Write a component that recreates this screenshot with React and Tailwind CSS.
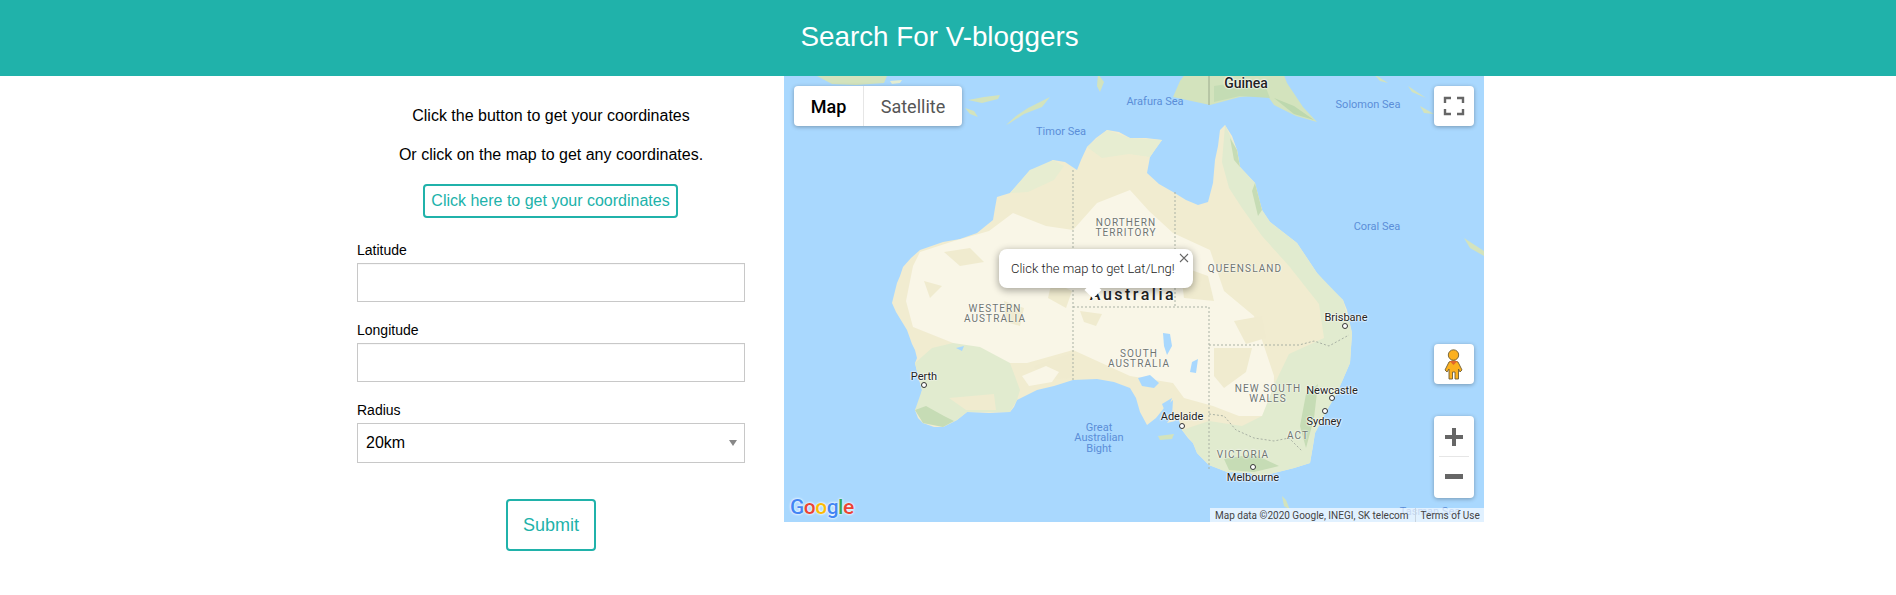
import React from "react";

const regions = [
  { t: "NORTHERN", x: 342, y: 147 },
  { t: "TERRITORY", x: 342, y: 157 },
  { t: "QUEENSLAND", x: 461, y: 193 },
  { t: "WESTERN", x: 211, y: 233 },
  { t: "AUSTRALIA", x: 211, y: 243 },
  { t: "SOUTH", x: 355, y: 278 },
  { t: "AUSTRALIA", x: 355, y: 288 },
  { t: "NEW SOUTH", x: 484, y: 313 },
  { t: "WALES", x: 484, y: 323 },
  { t: "VICTORIA", x: 459, y: 379 },
  { t: "ACT", x: 514, y: 360 },
];

const seas = [
  { t: "Timor Sea", x: 277, y: 55 },
  { t: "Arafura Sea", x: 371, y: 25 },
  { t: "Solomon Sea", x: 584, y: 28 },
  { t: "Coral Sea", x: 593, y: 150 },
  { t: "Great", x: 315, y: 351 },
  { t: "Australian", x: 315, y: 361 },
  { t: "Bight", x: 315, y: 372 },
  { t: "Tasman Sea", x: 646, y: 435 },
];

const cities = [
  { t: "Perth", x: 140, y: 300, dx: 140, dy: 309 },
  { t: "Brisbane", x: 562, y: 241, dx: 561, dy: 250 },
  { t: "Newcastle", x: 548, y: 314, dx: 548, dy: 322 },
  { t: "Sydney", x: 540, y: 345, dx: 541, dy: 335 },
  { t: "Adelaide", x: 398, y: 340, dx: 398, dy: 350 },
  { t: "Melbourne", x: 469, y: 401, dx: 469, dy: 391 },
];

const coast =
  "108,227 112,236 123,254 128,268 131,274 133,282 131,287 134,300 138,314 136,326 131,334 134,342 139,347 150,351 159,351 173,344 183,336 205,337 226,336 230,331 233,324 253,314 270,310 289,304 313,303 330,306 346,312 352,322 356,336 363,349 372,342 380,332 389,324 388,340 383,347 391,345 393,338 398,354 404,362 409,367 413,377 425,389 443,396 466,397 473,401 486,398 510,392 526,387 529,370 531,357 543,334 553,317 566,287 568,257 563,234 559,224 546,212 533,197 513,167 486,146 478,134 474,120 471,107 456,91 453,74 448,60 441,49 436,54 434,70 431,84 429,107 424,126 414,129 402,124 389,116 375,108 363,97 366,81 372,72 378,64 362,62 346,62 335,56 323,54 312,62 303,71 297,84 293,94 281,86 269,84 258,92 246,94 236,106 226,117 213,121 211,132 209,144 193,157 176,163 159,166 136,174 127,182 119,191 116,200 113,207";

function MapArt() {
  return (
    <svg viewBox="0 0 700 446" className="block w-full h-full" fill="none">
      <rect width="700" height="446" fill="#a9d8fe" />

      {/* islands up north */}
      <g fill="#d3e3bd">
        <polygon points="33,0 103,0 100,7 72,9 48,8" />
        <polygon points="106,5 118,4 116,7 108,8" fill="#e4edd2" />
        <polygon points="184,24 200,21 216,19 214,23 198,27" />
        <polygon points="181,32 190,35 194,41 186,38" />
        <polygon points="222,49 232,40 244,32 266,21 258,31 240,38 226,47" />
        <polygon points="314,-2 320,6 316,16 313,10" />
        <polygon points="389,21 396,5 404,-6 498,-6 503,7 519,31 533,46 512,40 490,29 483,19 456,21 426,29" />
        <polygon points="590,-2 604,7 596,5" />
        <polygon points="624,10 642,22 628,16" />
        <polygon points="636,30 650,38 640,37" />
        <polygon points="680,162 700,175 700,180 686,172" />
        <polygon points="374,360 390,358 388,363 376,364" />
        <polygon points="498,420 502,424 506,434 500,430" />
      </g>
      <polygon points="430,10 470,4 482,12 486,22 456,20 430,26" fill="#c4dcb4" />
      <polygon points="490,22 510,30 530,44 510,38" fill="#bdd8ae" />
      <line x1="425" y1="-6" x2="425" y2="29" stroke="#9aa98c" strokeWidth="1" />

      {/* mainland */}
      <polygon points={coast} fill="#f1ecd0" />

      {/* cream interior */}
      <polygon
        points="129,190 136,176 170,165 205,155 229,137 262,150 289,154 313,127 346,114 365,135 389,157 426,174 440,215 470,240 480,270 490,300 489,340 455,340 429,330 400,322 389,307 346,300 289,274 243,287 209,287 169,267 129,251 122,225"
        fill="#f9f6e7"
      />

      {/* tan patches */}
      <g fill="#f0ebcf">
        <polygon points="160,176 186,172 200,186 176,190" />
        <polygon points="220,225 240,232 236,250 222,246" />
        <polygon points="268,205 288,215 282,232 264,222" />
        <polygon points="140,205 158,210 146,222" />
        <polygon points="296,235 318,238 312,250 300,246" />
        <polygon points="396,190 424,200 430,225 400,222" />
        <polygon points="450,245 478,240 482,262 462,268" />
        <polygon points="430,272 468,272 462,296 440,312 430,300" />
        <polygon points="250,290 290,276 288,302 260,304" />
        <polygon points="165,322 210,318 212,334 182,334" />
      </g>
      <polygon points="238,300 262,290 275,296 268,306 245,310" fill="#f9f6e7" />

      {/* green edges */}
      <g fill="#e1ebcf">
        <polygon points="131,287 148,272 169,267 196,271 226,287 236,314 233,324 226,336 183,336 173,344 159,351 139,347 131,334 138,314" />
        <polygon points="226,117 246,94 269,84 280,90 270,104 244,116" fill="#e7edd1" />
        <polygon points="303,71 323,54 346,62 378,64 366,81 345,78 318,82" fill="#e7edd1" />
        <polygon points="441,49 453,74 456,91 471,107 478,134 486,146 513,167 533,197 559,224 568,257 566,287 553,317 543,334 531,357 526,387 510,392 486,398 473,401 466,397 443,396 425,389 413,377 409,367 398,354 425,345 458,350 478,340 492,305 505,278 540,262 535,228 505,190 478,160 458,132 445,112 438,86" />
      </g>
      <polygon points="165,322 210,318 212,334 182,334" fill="#f0ebcf" />
      <g fill="#c6dcb5">
        <polygon points="131,334 142,330 160,340 170,345 159,351 139,347" />
        <polygon points="468,115 471,107 478,134 474,140" />
        <polygon points="446,62 453,74 456,91 450,84" />
        <polygon points="440,383 470,378 495,390 470,396 445,394" />
        <polygon points="522,318 534,308 530,342 522,372 516,350" />
      </g>

      {/* lakes */}
      <g fill="#a9d8fe">
        <polygon points="379,257 386,258 388,270 383,279 380,270" />
        <polygon points="408,286 414,283 412,297 406,296" />
        <polygon points="354,302 366,299 375,307 370,312 358,310" />
        <polygon points="378,328 388,322 382,338" />
        <polygon points="172,272 180,270 178,275" />
        <polygon points="410,396 416,395 416,400" />
      </g>

      {/* state borders */}
      <g stroke="#a9b1a4" strokeWidth="1" strokeDasharray="2 2">
        <line x1="289" y1="94" x2="289" y2="304" />
        <line x1="391" y1="116" x2="391" y2="231" />
        <line x1="289" y1="231" x2="425" y2="231" />
        <line x1="425" y1="231" x2="425" y2="394" />
        <polyline points="425,269 515,269 530,265 545,270 565,259" />
        <polyline points="425,338 440,340 452,354 470,362 490,365 505,362 518,375" />
      </g>
    </svg>
  );
}

function GoogleLogo() {
  return (
    <div className="absolute left-[6px] bottom-[2px] font-['Roboto',sans-serif] text-[21px] font-medium leading-[26px] tracking-[-0.5px] [text-shadow:0_0_2px_#fff,0_0_3px_#fff]">
      <span className="text-[#4285f4]">G</span>
      <span className="text-[#ea4335]">o</span>
      <span className="text-[#fbbc05]">o</span>
      <span className="text-[#4285f4]">g</span>
      <span className="text-[#34a853]">l</span>
      <span className="text-[#ea4335]">e</span>
    </div>
  );
}

function MapPanel() {
  return (
    <div className="relative w-[700px] h-[446px] overflow-hidden font-['Roboto',sans-serif]">
      <MapArt />

      {/* map labels */}
      {seas.map((s) => (
        <span
          key={s.t}
          className="absolute -translate-x-1/2 -translate-y-1/2 whitespace-nowrap text-[11px] leading-none text-[#5b8ed8]"
          style={{ left: s.x, top: s.y }}
        >
          {s.t}
        </span>
      ))}
      {regions.map((r) => (
        <span
          key={r.t + r.y}
          className="absolute -translate-x-1/2 -translate-y-1/2 whitespace-nowrap text-[10px] leading-none tracking-[1.1px] text-[#6f7570] [text-shadow:0_0_2px_#fff,0_0_2px_#fff]"
          style={{ left: r.x, top: r.y }}
        >
          {r.t}
        </span>
      ))}
      {cities.map((c) => (
        <React.Fragment key={c.t}>
          <span
            className="absolute -translate-x-1/2 -translate-y-1/2 whitespace-nowrap text-[11px] leading-none text-[#222] [text-shadow:0_0_2px_#fff,0_0_2px_#fff,0_0_2px_#fff]"
            style={{ left: c.x, top: c.y }}
          >
            {c.t}
          </span>
          <span
            className="absolute w-[6px] h-[6px] -translate-x-1/2 -translate-y-1/2 rounded-full border border-[#333] bg-white"
            style={{ left: c.dx, top: c.dy }}
          />
        </React.Fragment>
      ))}
      <span className="absolute left-[462px] top-[7px] -translate-x-1/2 -translate-y-1/2 text-[14px] font-medium leading-none text-[#222] [text-shadow:0_0_2px_#fff,0_0_2px_#fff,0_0_2px_#fff]">
        Guinea
      </span>
      <span className="absolute left-[349px] top-[219px] -translate-x-1/2 -translate-y-1/2 text-[16px] font-medium leading-none tracking-[2.5px] text-[#222] [text-shadow:0_0_2px_#fff,0_0_2px_#fff]">
        Australia
      </span>

      {/* map type */}
      <div className="absolute left-[10px] top-[10px] flex h-10 w-[168px] rounded-sm bg-white text-[18px] shadow-[0_1px_4px_rgba(0,0,0,0.3)]">
        <div className="flex w-[70px] items-center justify-center border-r border-[#e6e6e6] font-medium text-black">Map</div>
        <div className="flex flex-1 items-center justify-center text-[#565656]">Satellite</div>
      </div>

      {/* fullscreen */}
      <div className="absolute right-[10px] top-[10px] h-10 w-10 rounded-sm bg-white shadow-[0_1px_4px_rgba(0,0,0,0.3)]">
        <svg viewBox="0 0 40 40" className="h-10 w-10" fill="none" stroke="#666" strokeWidth="2.4">
          <path d="M11 17V12H17M23 12H29V17M29 23V28H23M17 28H11V23" />
        </svg>
      </div>

      {/* pegman */}
      <div className="absolute right-[10px] top-[268px] h-10 w-10 rounded-sm bg-white shadow-[0_1px_4px_rgba(0,0,0,0.3)]">
        <svg viewBox="0 0 40 40" className="h-10 w-10">
          <path
            d="M15 18Q19.5 15 24 18L28 26L26 28L24.5 25V35H21V28H18.500V35H15V25L13 28L11 26Z"
            fill="#fbb01e"
            stroke="#6f5f35"
            strokeWidth="0.9"
          />
          <circle cx="19.500" cy="11" r="5.200" fill="#fbb01e" stroke="#6f5f35" strokeWidth="0.9" />
          <path d="M15.500 17L19.500 21L23.500 17Z" fill="#e2662b" />
        </svg>
      </div>

      {/* zoom */}
      <div className="absolute right-[10px] top-[340px] flex h-[82px] w-10 flex-col items-center rounded-sm bg-white shadow-[0_1px_4px_rgba(0,0,0,0.3)]">
        <svg viewBox="0 0 40 40" className="h-10 w-10 shrink-0" fill="#666">
          <path d="M18 12H22V19H29V23H22V30H18V23H11V19H18Z" />
        </svg>
        <div className="h-px w-[30px] shrink-0 bg-[#e6e6e6]" />
        <svg viewBox="0 0 40 40" className="h-10 w-10 shrink-0" fill="#666">
          <rect x="11" y="17" width="18" height="5" />
        </svg>
      </div>

      <GoogleLogo />

      {/* attribution */}
      <div className="absolute bottom-0 right-0 flex h-[14px] w-[274px] items-stretch bg-white/65 text-[10px] text-[#444]">
        <span className="flex items-center pl-[5px] pr-[6px]">Map data ©2020 Google, INEGI, SK telecom</span>
        <span className="flex items-center border-l border-[#c8d4e0] pl-[5px]">Terms of Use</span>
      </div>

      {/* info window */}
      <div className="absolute left-[215px] top-[173px] flex h-[39px] w-[194px] items-center rounded-lg bg-white pl-[12px] text-[13px] font-light text-[#222] shadow-[0_2px_7px_1px_rgba(0,0,0,0.3)]">
        Click the map to get Lat/Lng!
        <svg viewBox="0 0 10 10" className="absolute right-[4px] top-[4px] h-[10px] w-[10px]" stroke="#666" strokeWidth="1.100">
          <path d="M1 1L9 9M9 1L1 9" />
        </svg>
        <div className="absolute left-[88px] top-[35px] h-[12px] w-[12px] rotate-45 bg-white" />
      </div>
    </div>
  );
}

function Field({ label, children, className }) {
  return (
    <div className={className}>
      <label className="mb-[5px] block text-[14px] leading-[16px] text-black">{label}</label>
      {children}
    </div>
  );
}

export default function App() {
  return (
    <div className="min-h-[595px] bg-white font-['Liberation_Sans',Arial,sans-serif]">
      <header className="flex h-[76px] items-center justify-center bg-[#20b2aa]">
        <h1 className="text-[27.8px] font-normal leading-[32px] text-white mb-[2px] mr-[17px]">Search For V-bloggers</h1>
      </header>

      <div className="flex items-start gap-[39px] pl-[357px]">
        <form className="w-[388px] pt-[31px]">
          <p className="text-center text-[16px] leading-[18px] text-black">Click the button to get your coordinates</p>
          <p className="mt-[21px] text-center text-[16px] leading-[18px] text-black">Or click on the map to get any coordinates.</p>
          <div className="mt-[20px] flex justify-center pr-px">
            <button type="button" className="h-[34px] w-[255px] rounded border-2 border-[#20b2aa] text-[16px] text-[#20b2aa]">
              Click here to get your coordinates
            </button>
          </div>

          <Field label="Latitude" className="mt-[24px]">
            <input className="block h-[39px] w-full border border-[#c8c8c8] shadow-[inset_0_1px_1px_rgba(0,0,0,0.03)]" />
          </Field>
          <Field label="Longitude" className="mt-[20px]">
            <input className="block h-[39px] w-full border border-[#c8c8c8] shadow-[inset_0_1px_1px_rgba(0,0,0,0.03)]" />
          </Field>
          <Field label="Radius" className="mt-[20px]">
            <div className="relative">
              <select className="block h-[40px] w-full appearance-none border border-[#c8c8c8] bg-white pl-[8px] text-[16px] text-black">
                <option>20km</option>
              </select>
              <div className="pointer-events-none absolute right-[8px] top-[17px] h-0 w-0 border-x-[4px] border-t-[6px] border-x-transparent border-t-[#888]" />
            </div>
          </Field>

          <div className="mt-[36px] flex justify-center">
            <button type="submit" className="h-[52px] w-[90px] rounded border-2 border-[#20b2aa] text-[18px] text-[#20b2aa]">
              Submit
            </button>
          </div>
        </form>

        <MapPanel />
      </div>
    </div>
  );
}
